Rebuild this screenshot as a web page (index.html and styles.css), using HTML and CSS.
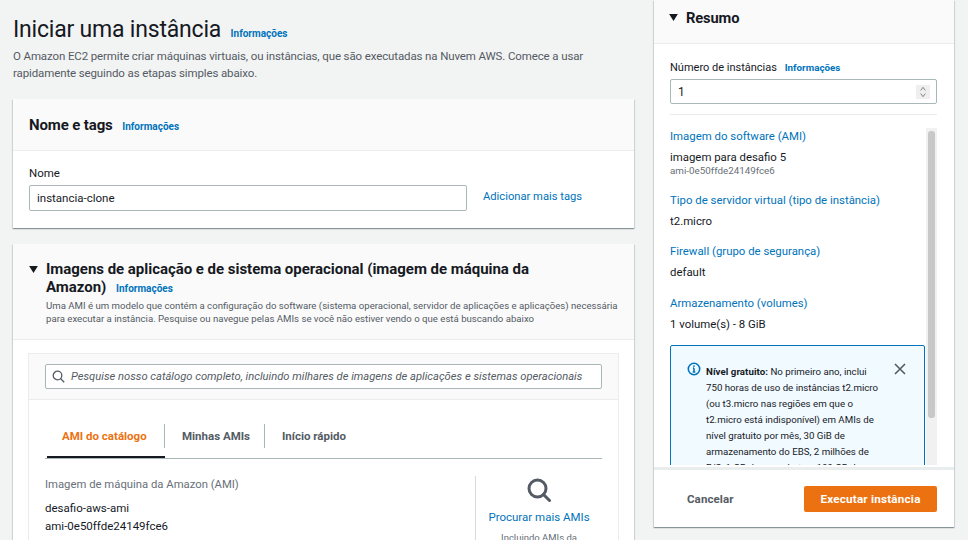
FILE: index.html
```html
<!DOCTYPE html>
<html lang="pt-BR">
<head>
  <meta charset="UTF-8" />
  <meta name="viewport" content="width=device-width, initial-scale=1.0"/>
  <title>Iniciar uma instância</title>
  <link rel="stylesheet" href="styles.css">
</head>
<body>
  <div class="page">
    <main class="main">
      <div class="page-head">
        <h1>Iniciar uma instância <a class="info" href="#">Informações</a></h1>
        <p>O Amazon EC2 permite criar máquinas virtuais, ou instâncias, que são executadas na Nuvem AWS. Comece a usar rapidamente seguindo as etapas simples abaixo.</p>
      </div>

      <section class="card card-name">
        <div class="card-head">
          <h2>Nome e tags <a class="info" href="#">Informações</a></h2>
        </div>
        <div class="card-body name-body">
          <label>Nome</label>
          <div class="name-row">
            <input class="text-input" type="text" value="instancia-clone">
            <a class="more-tags" href="#">Adicionar mais tags</a>
          </div>
        </div>
      </section>

      <section class="card">
        <div class="card-head ami-head">
          <svg class="caret" viewBox="0 0 10 8"><path d="M0 0h10L5 8z"/></svg>
          <div>
            <h2>Imagens de aplicação e de sistema operacional (imagem de máquina da Amazon) <a class="info" href="#">Informações</a></h2>
            <p>Uma AMI é um modelo que contém a configuração do software (sistema operacional, servidor de aplicações e aplicações) necessária para executar a instância. Pesquise ou navegue pelas AMIs se você não estiver vendo o que está buscando abaixo</p>
          </div>
        </div>
        <div class="ami-body">
          <div class="catalog">
            <div class="catalog-search">
              <div class="search-box">
                <svg class="search-icon" viewBox="0 0 16 16"><circle cx="6.8" cy="6.8" r="5.3"/><path d="M10.7 10.7l4.3 4.3"/></svg>
                <span>Pesquise nosso catálogo completo, incluindo milhares de imagens de aplicações e sistemas operacionais</span>
              </div>
            </div>
            <div class="catalog-body">
              <div class="tabs">
                <a class="tab active" href="#">AMI do catálogo</a>
                <a class="tab" href="#">Minhas AMIs</a>
                <a class="tab" href="#">Início rápido</a>
              </div>
              <div class="ami-row">
                <div class="ami-info">
                  <div class="ami-label">Imagem de máquina da Amazon (AMI)</div>
                  <div class="ami-name">desafio-aws-ami</div>
                  <div class="ami-name">ami-0e50ffde24149fce6</div>
                </div>
                <div class="ami-browse">
                  <svg class="browse-icon" viewBox="0 0 24 24"><circle cx="10.5" cy="10.5" r="8.5"/><path d="M16.5 16.5l6 6"/></svg>
                  <a href="#">Procurar mais AMIs</a>
                  <span>Incluindo AMIs da</span>
                </div>
              </div>
            </div>
          </div>
        </div>
      </section>
    </main>

    <aside class="summary">
      <div class="summary-head">
        <svg class="caret" viewBox="0 0 10 8"><path d="M0 0h10L5 8z"/></svg>
        <h2>Resumo</h2>
      </div>
      <div class="summary-top">
        <label>Número de instâncias <a class="info" href="#">Informações</a></label>
        <div class="number-box">
          <span>1</span>
          <div class="spinner">
            <svg viewBox="0 0 10 18"><path d="M2 7l3-4 3 4M2 11l3 4 3-4"/></svg>
          </div>
        </div>
      </div>
      <div class="summary-scroll">
        <div class="summary-list">
          <div class="item">
            <a href="#">Imagem do software (AMI)</a>
            <div class="val">imagem para desafio 5</div>
            <div class="sub">ami-0e50ffde24149fce6</div>
          </div>
          <div class="item">
            <a href="#">Tipo de servidor virtual (tipo de instância)</a>
            <div class="val">t2.micro</div>
          </div>
          <div class="item">
            <a href="#">Firewall (grupo de segurança)</a>
            <div class="val">default</div>
          </div>
          <div class="item">
            <a href="#">Armazenamento (volumes)</a>
            <div class="val">1 volume(s) - 8 GiB</div>
          </div>
          <div class="free-tier">
            <svg class="alert-icon" viewBox="0 0 16 16"><circle cx="8" cy="8" r="6.5"/><path d="M8 7v4.5M6.5 11.5h3M6.8 7h1.2"/><circle class="dot" cx="8" cy="4.6" r="1"/></svg>
            <p><b>Nível gratuito:</b> No primeiro ano, inclui<br>750 horas de uso de instâncias t2.micro<br>(ou t3.micro nas regiões em que o<br>t2.micro está indisponível) em AMIs de<br>nível gratuito por mês, 30 GiB de<br>armazenamento do EBS, 2 milhões de<br>E/S, 1 GB de snapshots e 100 GB de</p>
            <svg class="close-icon" viewBox="0 0 12 12"><path d="M1 1l10 10M11 1L1 11"/></svg>
          </div>
        </div>
        <div class="scrollbar"><div class="thumb"></div></div>
      </div>
      <div class="summary-foot">
        <a class="cancel" href="#">Cancelar</a>
        <button class="launch">Executar instância</button>
      </div>
    </aside>
  </div>
</body>
</html>
```

FILE: styles.css
```css
* {
  box-sizing: border-box;
}
body {
  margin: 0;
  background: #f2f3f3;
  font-family: Roboto, "Noto Sans", sans-serif;
  color: #16191f;
}
a {
  color: #0073bb;
  text-decoration: none;
}
.page {
  display: flex;
  align-items: flex-start;
  gap: 20px;
  height: 540px;
  padding: 0 14px 0 13px;
  overflow: hidden;
}
.main {
  width: 621px;
  flex: none;
}
.page-head {
  padding-top: 15px;
  margin-bottom: 17px;
}
h1 {
  margin: 0;
  font-size: 23px;
  line-height: 30px;
  font-weight: 400;
  letter-spacing: -0.2px;
}
h1 .info {
  margin-left: 4px;
}
.info {
  font-size: 10px;
  font-weight: 700;
  letter-spacing: 0;
  margin-left: 6px;
}
.page-head p {
  margin: -1px 0 0;
  font-size: 11.5px;
  line-height: 17px;
  letter-spacing: -0.12px;
  color: #545b64;
}
.card {
  background: #fff;
  box-shadow: 0 1px 1px rgba(0,28,36,0.3), 1px 1px 1px rgba(0,28,36,0.1), -1px 1px 1px rgba(0,28,36,0.1);
  margin-bottom: 16px;
}
.card-name {
  height: 129px;
}
.card-head {
  background: #fafafa;
  border-bottom: 1px solid #eaeded;
  padding: 16px;
  height: 52px;
}
h2 {
  margin: 0;
  font-size: 15px;
  line-height: 20px;
  font-weight: 700;
  letter-spacing: -0.13px;
}
.name-body {
  padding: 14px 16px;
}
label {
  display: block;
  font-size: 11.5px;
  line-height: 16px;
}
.name-row {
  display: flex;
  align-items: center;
  margin-top: 4px;
}
.text-input {
  width: 438px;
  height: 26px;
  padding: 0 7px;
  border: 1px solid #aab7b8;
  border-radius: 2px;
  font: 11.5px Roboto, sans-serif;
  color: #16191f;
}
.more-tags {
  margin-left: 16px;
  font-size: 11.2px;
  position: relative;
  top: -2px;
}
.ami-head {
  display: flex;
  height: 96px;
  padding: 16px 16px 0;
}
.ami-head h2 {
  max-width: 530px;
  line-height: 18px;
  letter-spacing: -0.03px;
}
.caret {
  width: 9px;
  height: 7px;
  flex: none;
  fill: #16191f;
}
.ami-head .caret {
  margin: 6px 8px 0 0;
}
.ami-head p {
  margin: 1px 0 0;
  font-size: 9.65px;
  line-height: 13px;
  color: #545b64;
}
.ami-body {
  padding: 13px 15px 0;
}
.catalog {
  border: 1px solid #eaeded;
  height: 200px;
}
.catalog-search {
  background: #fafafa;
  border-bottom: 1px solid #eaeded;
  height: 46px;
  padding: 10px 16px;
}
.search-box {
  display: flex;
  align-items: center;
  height: 25px;
  padding: 0 6px;
  background: #fff;
  border: 1px solid #aab7b8;
  border-radius: 2px;
  font-size: 11.2px;
  font-style: italic;
  color: #545b64;
  white-space: nowrap;
}
.search-icon {
  width: 13px;
  height: 13px;
  margin-right: 6px;
  fill: none;
  stroke: #545b64;
  stroke-width: 1.6;
}
.catalog-body {
  padding: 24px 16px 0;
}
.tabs {
  display: flex;
  height: 35px;
  border-bottom: 1px solid #aab7b8;
}
.tab {
  width: 100px;
  height: 34px;
  padding: 0 17px;
  font-size: 11.5px;
  font-weight: 700;
  line-height: 24px;
  color: #545b64;
  position: relative;
  white-space: nowrap;
}
.tab::after {
  content: "";
  position: absolute;
  right: 0;
  top: 0;
  height: 24px;
  border-right: 1px solid #aab7b8;
}
.tab:last-child::after {
  display: none;
}
.tab.active {
  width: 118px;
  color: #ec7211;
  margin-left: 2px;
  padding-left: 15px;
  border-bottom: 2px solid #16191f;
}
.ami-row {
  display: flex;
  margin-top: 18px;
}
.ami-info {
  flex: 1;
}
.ami-label {
  font-size: 11.3px;
  line-height: 16px;
  color: #687078;
  margin-bottom: 6px;
}
.ami-name {
  font-size: 11.5px;
  line-height: 18px;
}
.ami-browse {
  width: 127px;
  margin-top: -1px;
  border-left: 1px solid #d5dbdb;
  display: flex;
  flex-direction: column;
  align-items: center;
  height: 70px;
}
.browse-icon {
  width: 24px;
  height: 24px;
  margin-top: 2px;
  fill: none;
  stroke: #545b64;
  stroke-width: 3;
  stroke-linecap: round;
}
.ami-browse a {
  margin-top: 8px;
  font-size: 11.5px;
}
.ami-browse span {
  margin-top: 8px;
  font-size: 9.5px;
  color: #687078;
}

.summary {
  width: 300px;
  flex: none;
  height: 527px;
  background: #fff;
  box-shadow: 0 1px 1px rgba(0,28,36,0.3), 1px 1px 1px rgba(0,28,36,0.1), -1px 1px 1px rgba(0,28,36,0.1);
  display: flex;
  flex-direction: column;
}
.summary-head {
  display: flex;
  align-items: center;
  height: 44px;
  padding: 0 16px 8px 15px;
  background: #fafafa;
  border-bottom: 1px solid #eaeded;
}
.summary-head .caret {
  margin-right: 8px;
}
.summary-head h2 {
  font-size: 14.7px;
}
.summary-top {
  padding: 16px 17px 0 16px;
}
.summary-top label {
  font-size: 11px;
}
.summary-top .info {
  margin-left: 5px;
  font-size: 9.8px;
}
.number-box {
  display: flex;
  align-items: center;
  justify-content: space-between;
  height: 25px;
  margin-top: 3px;
  padding: 0 6px 0 7px;
  border: 1px solid #aab7b8;
  border-radius: 2px;
  font-size: 12px;
}
.spinner {
  width: 14px;
  height: 14px;
  background: #efefef;
}
.spinner svg {
  display: block;
  width: 14px;
  height: 14px;
  fill: none;
  stroke: #666;
}
.summary-scroll {
  flex: 1;
  min-height: 0;
  display: flex;
  justify-content: space-between;
  overflow: hidden;
  margin: 10px 17px 2px 16px;
  padding-top: 13px;
  border-top: 1px solid #eaeded;
}
.summary-list {
  width: 255px;
}
.item {
  margin-bottom: 14.5px;
  font-size: 11.4px;
}
.item a {
  display: block;
  line-height: 16px;
  white-space: nowrap;
}
.val {
  margin-top: 5px;
  line-height: 16px;
}
.sub {
  font-size: 9.8px;
  line-height: 12px;
  color: #687078;
}
.free-tier {
  display: flex;
  align-items: flex-start;
  height: 200px;
  margin-top: -1px;
  padding: 18px 18px 0 16px;
  background: #f1faff;
  border: 1px solid #0073bb;
  border-radius: 2px;
}
.free-tier p {
  margin: 0 0 0 5px;
  flex: 1;
  font-size: 9.7px;
  line-height: 16px;
  white-space: nowrap;
}
.free-tier b {
  letter-spacing: 0.05px;
}
.alert-icon {
  width: 14px;
  height: 14px;
  margin-top: -2px;
  flex: none;
  fill: none;
  stroke: #0073bb;
  stroke-width: 1.8;
}
.alert-icon .dot {
  fill: #0073bb;
  stroke: none;
}
.close-icon {
  width: 12px;
  height: 12px;
  flex: none;
  margin-top: -1px;
  fill: none;
  stroke: #545b64;
  stroke-width: 1.6;
}
.scrollbar {
  width: 11px;
  height: 337px;
  padding: 3px 2px;
  background: #f1f1f1;
}
.thumb {
  height: 287px;
  background: #c8c8c8;
  border-radius: 3px;
}
.summary-foot {
  display: flex;
  justify-content: space-between;
  align-items: center;
  height: 60px;
  padding: 0 17px 0 33px;
  background: #fff;
  border-top: 3px solid #eaeded;
}
.cancel {
  font-size: 11.5px;
  font-weight: 700;
  letter-spacing: 0.1px;
  color: #545b64;
}
.launch {
  width: 133px;
  height: 26px;
  background: #ec7211;
  color: #fff;
  border: none;
  border-radius: 2px;
  font: 700 11.7px Roboto, sans-serif;
  letter-spacing: 0.2px;
}
```
